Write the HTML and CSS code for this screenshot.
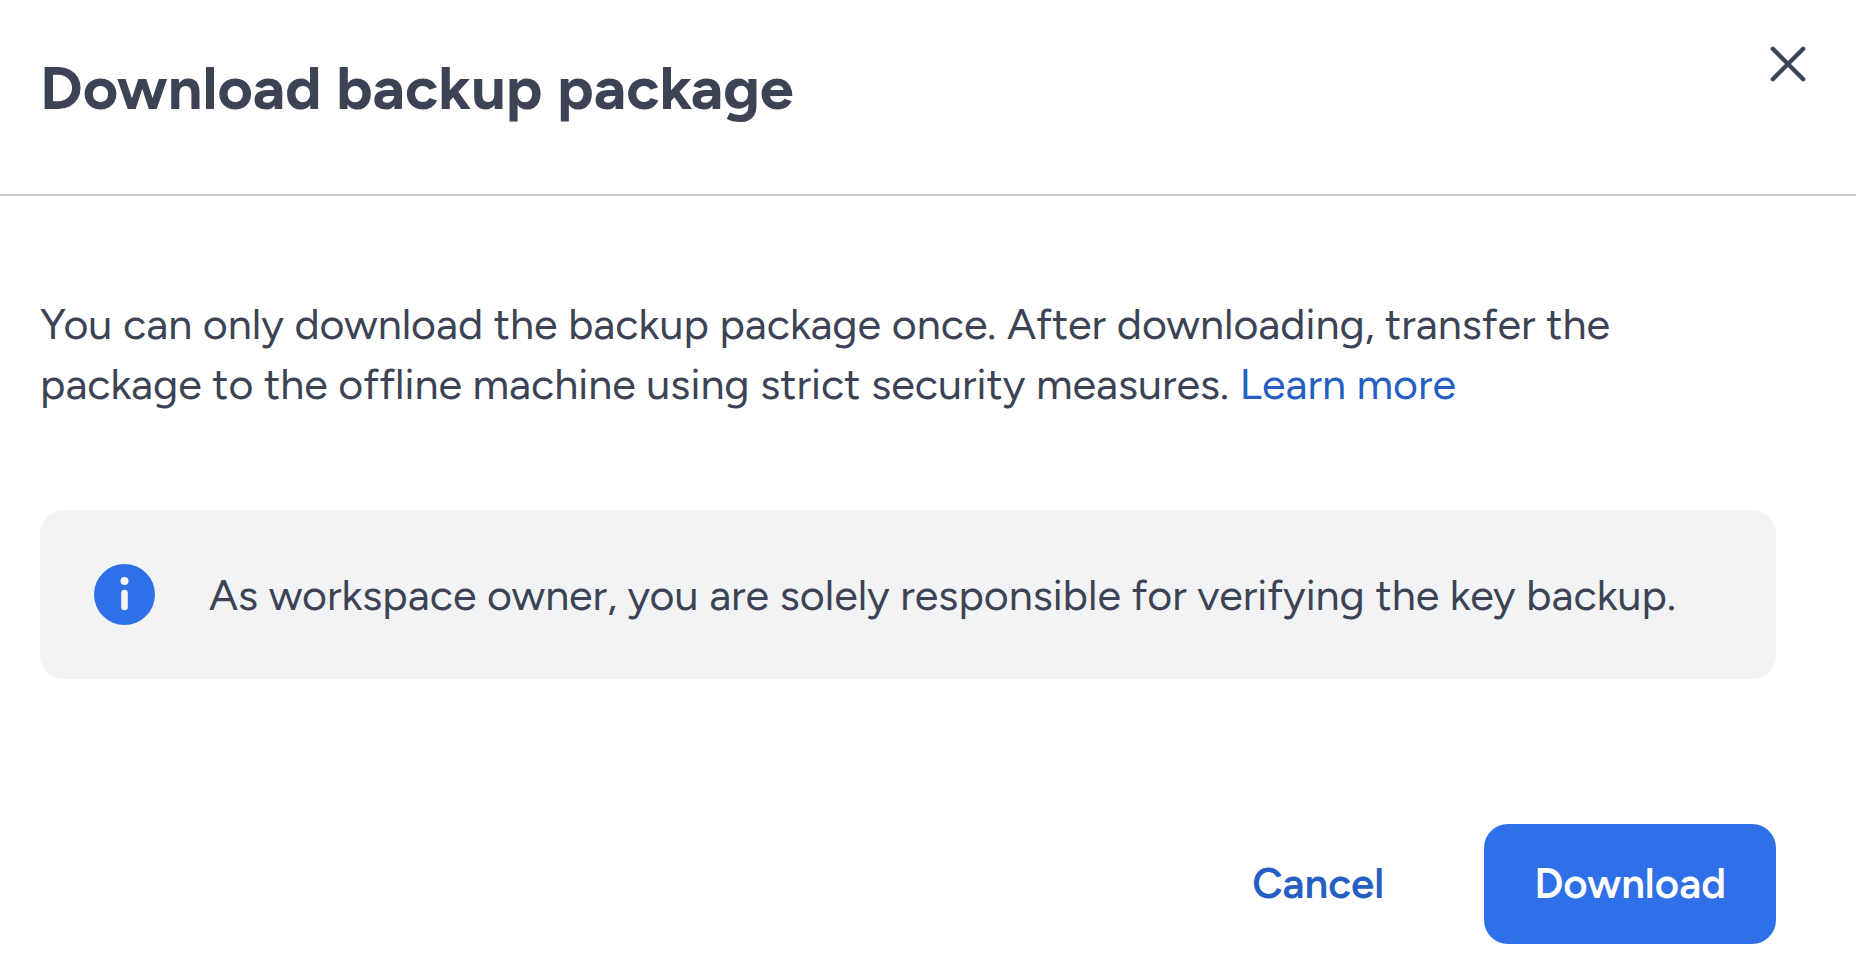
FILE: index.html
```
<!DOCTYPE html>
<html lang="en">

<head>
    <meta charset="UTF-8">
    <meta name="viewport" content="width=device-width, initial-scale=1.0">
    <title>Download backup package</title>
    <link rel="stylesheet" href="styles.css">
</head>

<body>
    <div class="dialog" role="dialog" aria-labelledby="dialogTitle">
        <header class="dialog-header">
            <h1 id="dialogTitle" class="dialog-title">Download backup package</h1>
            <button type="button" class="close-button" aria-label="Close">
                <svg width="40" height="40" viewBox="0 0 40 40" fill="none" stroke="currentColor" stroke-width="4.4" stroke-linecap="round">
                    <path d="M4.8 4.8L35.2 35.2M35.2 4.8L4.8 35.2" />
                </svg>
            </button>
        </header>

        <main class="dialog-body">
            <p class="dialog-text">You can only download the backup package once. After downloading, transfer the package to the offline machine using strict security measures. <a class="link" href="#">Learn more</a></p>

            <div class="note">
                <svg class="note-icon" width="61" height="61" viewBox="0 0 61 61">
                    <circle cx="30.5" cy="30.5" r="30.5" fill="#2f70e8" />
                    <circle cx="30.5" cy="17" r="4" fill="#f2f3f5" />
                    <rect x="27.2" y="25.7" width="6.6" height="20.6" rx="3.3" fill="#f2f3f5" />
                </svg>
                <p class="note-text">As workspace owner, you are solely responsible for verifying the key backup.</p>
            </div>
        </main>

        <footer class="dialog-footer">
            <button type="button" class="button button-text">Cancel</button>
            <button type="button" class="button button-primary">Download</button>
        </footer>
    </div>
</body>

</html>
```
FILE: styles.css
```
* {
    box-sizing: border-box;
}

body {
    font-family: Figtree, Lato, sans-serif;
    margin: 0;
    background-color: #fff;
    color: #3b4354;
    font-size: 43px;
    line-height: 60px;
}

/* Dialog header */
.dialog-header {
    display: flex;
    justify-content: space-between;
    align-items: flex-start;
    padding: 40px 44px 58px 40px;
    border-bottom: 2px solid #c8ccd1;
}

.dialog-title {
    margin: 0;
    font-size: 61px;
    font-weight: bold;
    line-height: 96px;
}

.close-button {
    display: flex;
    padding: 4px;
    border: none;
    background: none;
    color: inherit;
    cursor: pointer;
}

/* Dialog body */
.dialog-body {
    padding: 98px 80px 0 40px;
}

.dialog-text {
    max-width: 1640px;
    margin: 0;
}

.link {
    color: #265fc4;
    text-decoration: none;
}

.link:hover {
    text-decoration: underline;
}

.note {
    display: flex;
    align-items: center;
    gap: 54px;
    margin-top: 96px;
    padding: 54px;
    background-color: #f2f3f5;
    border-radius: 24px;
}

.note-icon {
    flex-shrink: 0;
}

.note-text {
    margin: 0;
}

/* Dialog buttons */
.dialog-footer {
    display: flex;
    justify-content: flex-end;
    gap: 50px;
    padding: 145px 80px 24px 40px;
}

.button {
    padding: 30px 50px;
    border: none;
    border-radius: 24px;
    font: inherit;
    font-size: 42px;
    font-weight: 600;
    cursor: pointer;
}

.button-text {
    background: none;
    color: #265fc4;
}

.button-primary {
    background-color: #2f70e8;
    color: #fff;
}
```
